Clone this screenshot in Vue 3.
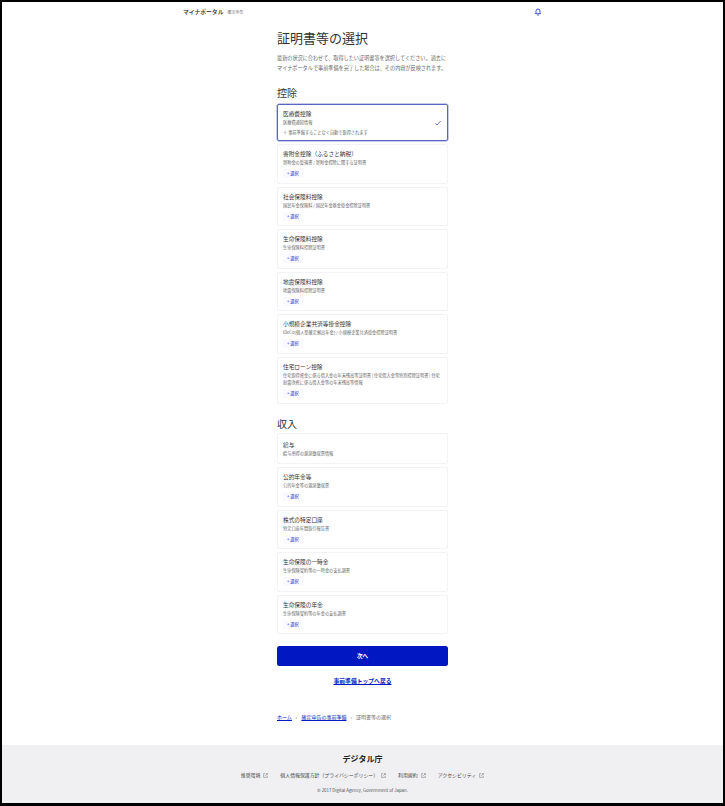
<script setup>
const deductions = [
	{ title: "医療費控除", desc: "医療費通知情報", selected: true },
	{ title: "寄附金控除（ふるさと納税）", desc: "寄附金の受領書 / 寄附金控除に関する証明書" },
	{ title: "社会保険料控除", desc: "国民年金保険料 / 国民年金基金掛金控除証明書" },
	{ title: "生命保険料控除", desc: "生命保険料控除証明書" },
	{ title: "地震保険料控除", desc: "地震保険料控除証明書" },
	{ title: "小規模企業共済等掛金控除", desc: "iDeCo(個人型確定拠出年金) / 小規模企業共済掛金控除証明書" },
	{ title: "住宅ローン控除", desc: "住宅取得資金に係る借入金の年末残高等証明書 | 住宅借入金等特別控除証明書 | 住宅耐震改修に係る借入金等の年末残高等情報" },
];
const incomes = [
	{ title: "給与", desc: "給与所得の源泉徴収票情報", noAction: true },
	{ title: "公的年金等", desc: "公的年金等の源泉徴収票" },
	{ title: "株式の特定口座", desc: "特定口座年間取引報告書" },
	{ title: "生命保険の一時金", desc: "生命保険契約等の一時金の支払調書" },
	{ title: "生命保険の年金", desc: "生命保険契約等の年金の支払調書" },
];
const footerLinks = ["推奨環境", "個人情報保護方針（プライバシーポリシー）", "利用規約", "アクセシビリティ"];
</script>

<template>
	<div class="page">
		<header class="header">
			<div class="brand"><b>マイナポータル</b><span>確定申告</span></div>
			<svg class="bell" viewBox="0 0 24 24" fill="none" stroke="#0017c1" stroke-width="2.2">
				<path d="M12 3a6 6 0 0 0-6 6v5l-2 3h16l-2-3V9a6 6 0 0 0-6-6z" />
				<path d="M10 20a2 2 0 0 0 4 0" />
			</svg>
		</header>

		<main class="main">
			<h1>証明書等の選択</h1>
			<p class="lead">最新の状況に合わせて、取得したい証明書等を選択してください。過去にマイナポータルで事前準備を完了した場合は、その内容が反映されます。</p>

			<h2>控除</h2>
			<div class="cards">
				<div v-for="item in deductions" :key="item.title" class="card" :class="{ selected: item.selected }">
					<div class="card-body">
						<div class="card-title">{{ item.title }}</div>
						<div class="card-desc">{{ item.desc }}</div>
						<div v-if="item.selected" class="auto">＋ 事前準備することなく自動で取得されます</div>
						<div v-else class="pick">+ 選択</div>
					</div>
					<svg v-if="item.selected" class="check" viewBox="0 0 24 24" fill="none" stroke="#4450b8" stroke-width="2.4">
						<path d="M4 13l5 5L20 6" />
					</svg>
				</div>
			</div>

			<h2 class="income">収入</h2>
			<div class="cards cards-income">
				<div v-for="item in incomes" :key="item.title" class="card" :class="{ plain: item.noAction }">
					<div class="card-body">
						<div class="card-title">{{ item.title }}</div>
						<div class="card-desc">{{ item.desc }}</div>
						<div v-if="!item.noAction" class="pick">+ 選択</div>
					</div>
				</div>
			</div>

			<button class="next">次へ</button>
			<a class="back">事前準備トップへ戻る</a>

			<nav class="crumbs">
				<a>ホーム</a><span>›</span><a>確定申告の事前準備</a><span>›</span><em>証明書等の選択</em>
			</nav>
		</main>

		<footer class="footer">
			<div class="agency">デジタル庁</div>
			<ul class="links">
				<li v-for="link in footerLinks" :key="link">
					{{ link }}
					<svg viewBox="0 0 12 12" fill="none" stroke="#555" stroke-width="1">
						<path d="M5 1.5H1.5v9h9V7M7 1.5h3.5V5M10.5 1.5L5.5 6.5" />
					</svg>
				</li>
			</ul>
			<div class="copy">© 2017 Digital Agency, Government of Japan.</div>
		</footer>
	</div>
</template>

<style>
html, body {
	margin: 0;
	background: #fff;
}
</style>

<style scoped>
.page {
	box-sizing: border-box;
	display: flex;
	flex-direction: column;
	width: 725px;
	height: 806px;
	overflow: hidden;
	border: solid #000;
	border-width: 2px 2px 3px 2px;
	font-family: "Noto Sans CJK JP", "Noto Sans", sans-serif;
	color: #333;
}

/* ヘッダー */
.header {
	display: flex;
	align-items: center;
	justify-content: space-between;
	height: 19px;
	padding: 0 181px 0 181px;
}
.brand {
	display: flex;
	align-items: baseline;
	gap: 4px;
}
.brand b {
	font-size: 5.8px;
	font-weight: 500;
	color: #222;
}
.brand span {
	font-size: 4px;
	color: #777;
}
.bell {
	width: 8px;
	height: 8px;
}

/* 本文 */
.main {
	display: flex;
	flex-direction: column;
	flex: 1;
	width: 171px;
	margin: 0 auto;
	min-height: 0;
}
h1 {
	margin: 7px 0 0;
	font-size: 13px;
	line-height: 20px;
	font-weight: 400;
	color: #333;
}
.lead {
	margin: 5px 0 0;
	font-size: 5.15px;
	line-height: 10px;
	color: #666;
}
h2 {
	margin: 12px 0 0;
	font-size: 10px;
	line-height: 16px;
	font-weight: 400;
	color: #333;
}
.income {
	margin-top: 12.5px;
}

/* カード */
.cards {
	display: flex;
	flex-direction: column;
	gap: 3px;
	margin-top: 3px;
}
.cards-income {
	margin-top: 1px;
}
.card {
	box-sizing: border-box;
	display: flex;
	align-items: center;
	justify-content: space-between;
	padding: 4px 5px 4.6px;
	border: 1px solid #f3f3f5;
	border-radius: 2px;
}
.card.selected {
	border-color: #5a66c4;
	box-shadow: 0 0 0 0.5px #8f98dc;
	padding-bottom: 4px;
}
.card.plain {
	padding-top: 6px;
	padding-bottom: 6px;
}
.card-body {
	min-width: 0;
}
.card-title {
	font-size: 5.7px;
	line-height: 9px;
	color: #333;
}
.card-desc {
	margin-top: 1px;
	font-size: 4.2px;
	line-height: 7px;
	color: #666;
}
.pick {
	width: fit-content;
	margin-top: 3px;
	padding: 0 4px;
	font-size: 4.2px;
	line-height: 9px;
	color: #1a2bbf;
	background: #f9f9fe;
	border-radius: 1px;
}
.auto {
	margin-top: 3px;
	font-size: 4.2px;
	line-height: 7px;
	color: #666;
}
.check {
	flex: none;
	width: 8px;
	height: 8px;
}

/* ボタン */
.next {
	flex: none;
	height: 20px;
	margin-top: 11.5px;
	padding: 0;
	border: 0;
	border-radius: 2.5px;
	background: #0017c1;
	color: #fff;
	font-family: inherit;
	font-size: 5.6px;
	font-weight: 700;
}
.back {
	margin-top: 10px;
	text-align: center;
	font-size: 5.8px;
	line-height: 10px;
	font-weight: 700;
	color: #0017c1;
	text-decoration: underline;
}

/* パンくず */
.crumbs {
	display: flex;
	align-items: center;
	gap: 4px;
	margin-top: 26px;
	font-size: 5px;
	line-height: 10px;
	color: #666;
}
.crumbs a {
	color: #0017c1;
	text-decoration: underline;
}
.crumbs em {
	font-style: normal;
}

/* フッター */
.footer {
	flex: none;
	display: flex;
	flex-direction: column;
	align-items: center;
	height: 58px;
	background: #f0f0f2;
}
.agency {
	margin-top: 7px;
	font-size: 8px;
	line-height: 14px;
	font-weight: 700;
	color: #222;
}
.links {
	display: flex;
	gap: 12px;
	margin: 4px 0 0;
	padding: 0;
	list-style: none;
}
.links li {
	display: flex;
	align-items: center;
	gap: 3px;
	font-size: 4.9px;
	line-height: 10px;
	color: #444;
}
.links svg {
	width: 5px;
	height: 5px;
}
.copy {
	margin-top: 7px;
	font-size: 4.35px;
	line-height: 7px;
	color: #555;
}
</style>
